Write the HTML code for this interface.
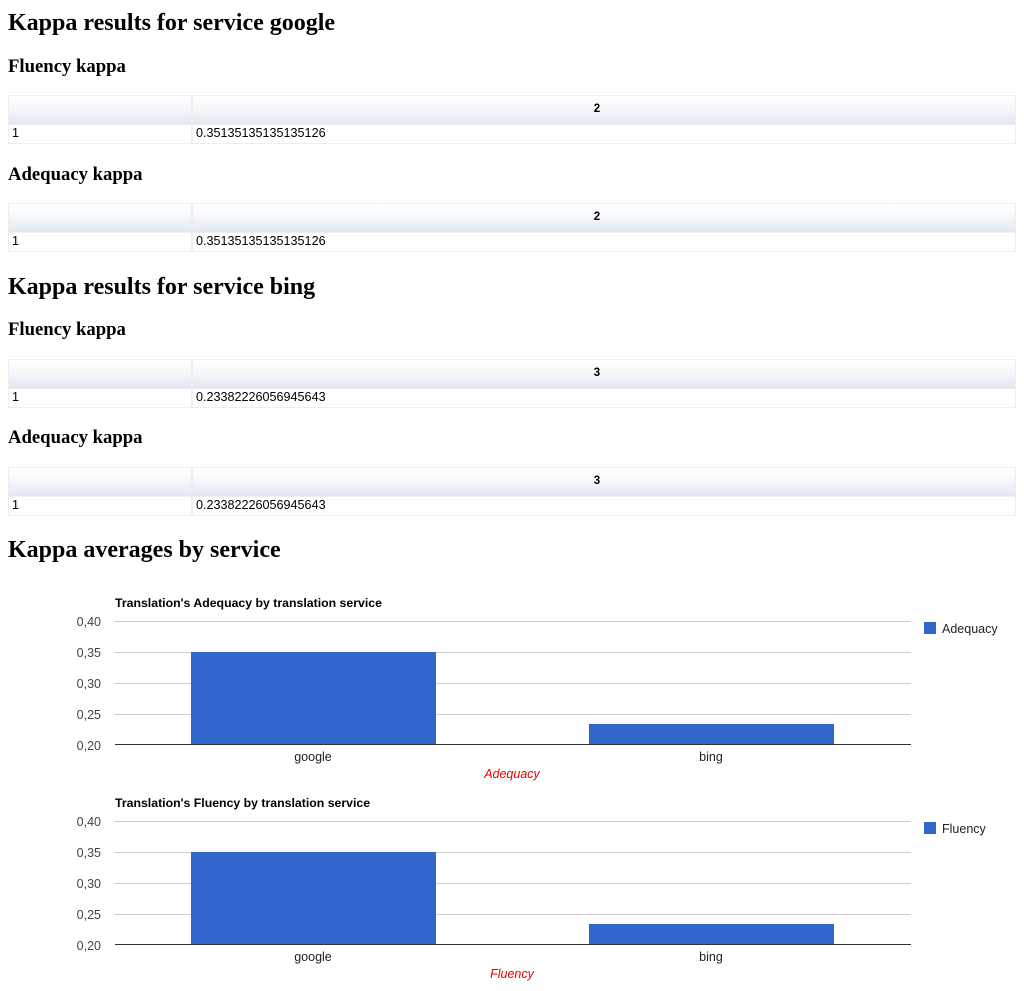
<!DOCTYPE html>
<html><head><meta charset="utf-8"><style>
body{margin:0;width:1024px;height:991px;background:#fff;position:relative;overflow:hidden;font-family:"Liberation Sans",sans-serif}
.h2{position:absolute;left:8px;font:bold 24px/28px "Liberation Serif",serif;color:#000;margin:0}
.h3{position:absolute;left:8px;font:bold 18.7px/22px "Liberation Serif",serif;color:#000;margin:0}
.t{position:absolute;left:8px;width:1008px;height:49px;border:1px solid #eee;box-sizing:border-box;font-size:12.6px}
.t .hd{position:absolute;left:0;top:0;width:100%;height:28px;background:linear-gradient(#fff 0%,#f5f7fb 50%,#e1e7f1 100%);border-bottom:1px solid #eee}
.t .v{position:absolute;left:182px;top:0;width:2px;height:100%;background:#eee}
.t .hn{position:absolute;left:570px;width:36px;top:7px;text-align:center;font-weight:bold;font-size:11.5px}
.t .c1{position:absolute;left:3px;top:30px}
.t .c2{position:absolute;left:187px;top:30px}
svg{position:absolute;left:0}
</style></head><body>
<div class="h2" style="top:9px">Kappa results for service google</div>
<div class="h3" style="top:56px">Fluency kappa</div>
<div class="t" style="top:95px"><div class="hd"></div><div class="v"></div><div class="hn">2</div><div class="c1">1</div><div class="c2">0.35135135135135126</div></div>
<div class="h3" style="top:164px">Adequacy kappa</div>
<div class="t" style="top:203px"><div class="hd"></div><div class="v"></div><div class="hn">2</div><div class="c1">1</div><div class="c2">0.35135135135135126</div></div>
<div class="h2" style="top:273px">Kappa results for service bing</div>
<div class="h3" style="top:319px">Fluency kappa</div>
<div class="t" style="top:359px"><div class="hd"></div><div class="v"></div><div class="hn">3</div><div class="c1">1</div><div class="c2">0.23382226056945643</div></div>
<div class="h3" style="top:427px">Adequacy kappa</div>
<div class="t" style="top:467px"><div class="hd"></div><div class="v"></div><div class="hn">3</div><div class="c1">1</div><div class="c2">0.23382226056945643</div></div>
<div class="h2" style="top:536px">Kappa averages by service</div>

<svg style="top:590px" width="1024" height="200" font-family="Liberation Sans, sans-serif">
<text x="115" y="17" font-size="12.3" font-weight="bold">Translation's Adequacy by translation service</text>
<g stroke="#ccc"><line x1="115" x2="911" y1="31.5" y2="31.5"/><line x1="115" x2="911" y1="62.5" y2="62.5"/><line x1="115" x2="911" y1="93.5" y2="93.5"/><line x1="115" x2="911" y1="124.5" y2="124.5"/></g>
<g font-size="12.5" fill="#444" text-anchor="end"><text x="101" y="36">0,40</text><text x="101" y="67">0,35</text><text x="101" y="98">0,30</text><text x="101" y="129">0,25</text><text x="101" y="160">0,20</text></g>
<rect x="191" y="62" width="245" height="93" fill="#3366cc"/>
<rect x="589" y="134" width="245" height="21" fill="#3366cc"/>
<line x1="115" x2="911" y1="154.5" y2="154.5" stroke="#333"/>
<g font-size="12.5" fill="#222" text-anchor="middle"><text x="313" y="171">google</text><text x="711" y="171">bing</text></g>
<text x="512" y="188" font-size="12.5" fill="#e00" font-style="italic" text-anchor="middle">Adequacy</text>
<rect x="924" y="32" width="12" height="12" fill="#3366cc"/>
<text x="942" y="43" font-size="12.5" fill="#222">Adequacy</text>
</svg>

<svg style="top:790px" width="1024" height="200" font-family="Liberation Sans, sans-serif">
<text x="115" y="17" font-size="12.3" font-weight="bold">Translation's Fluency by translation service</text>
<g stroke="#ccc"><line x1="115" x2="911" y1="31.5" y2="31.5"/><line x1="115" x2="911" y1="62.5" y2="62.5"/><line x1="115" x2="911" y1="93.5" y2="93.5"/><line x1="115" x2="911" y1="124.5" y2="124.5"/></g>
<g font-size="12.5" fill="#444" text-anchor="end"><text x="101" y="36">0,40</text><text x="101" y="67">0,35</text><text x="101" y="98">0,30</text><text x="101" y="129">0,25</text><text x="101" y="160">0,20</text></g>
<rect x="191" y="62" width="245" height="93" fill="#3366cc"/>
<rect x="589" y="134" width="245" height="21" fill="#3366cc"/>
<line x1="115" x2="911" y1="154.5" y2="154.5" stroke="#333"/>
<g font-size="12.5" fill="#222" text-anchor="middle"><text x="313" y="171">google</text><text x="711" y="171">bing</text></g>
<text x="512" y="188" font-size="12.5" fill="#e00" font-style="italic" text-anchor="middle">Fluency</text>
<rect x="924" y="32" width="12" height="12" fill="#3366cc"/>
<text x="942" y="43" font-size="12.5" fill="#222">Fluency</text>
</svg>
</body></html>
